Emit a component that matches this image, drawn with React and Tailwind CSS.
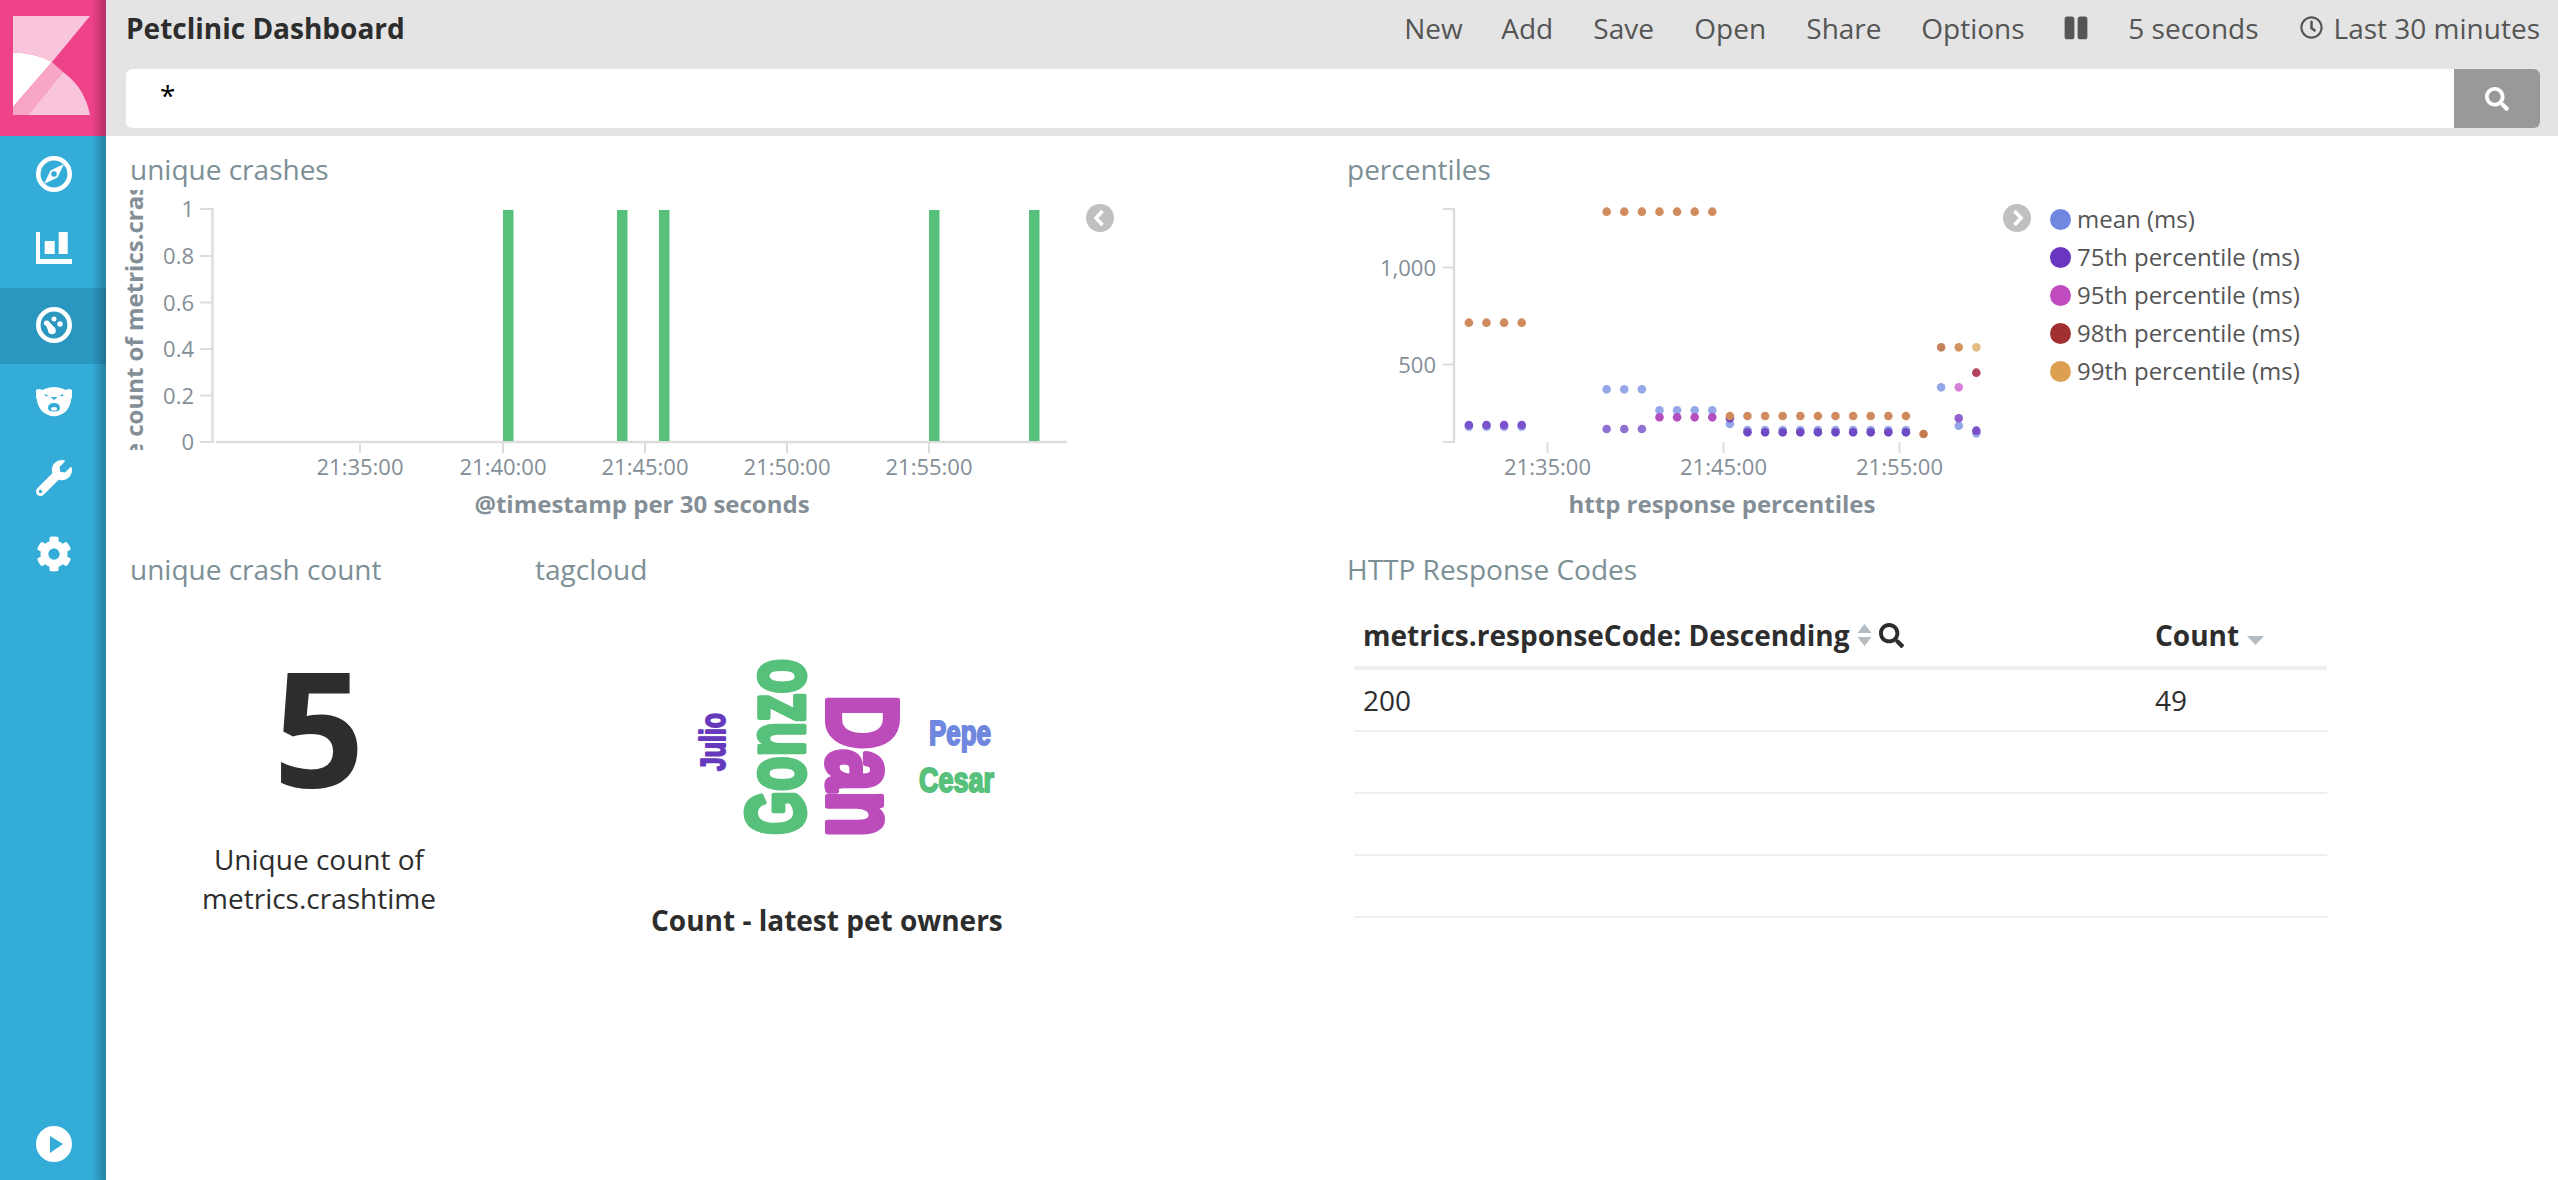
import { FaWrench, FaCog, FaSearch, FaPause, FaRegClock } from 'react-icons/fa';

const font = { fontFamily: '"Open Sans", "Noto Sans", sans-serif' };

const CompassIcon = () => (
  <svg viewBox="0 0 36 36" className="w-[36px] h-[36px]">
    <circle cx="18" cy="18" r="15.7" fill="none" stroke="white" strokeWidth="4.6" />
    <path d="M28 8 L21.5 21.5 L8 28 L14.5 14.5 Z" fill="white" />
    <circle cx="18" cy="18" r="2.8" fill="#33acd7" />
  </svg>
);

const BarsIcon = () => (
  <svg viewBox="0 0 36 32" className="w-[36px] h-[32px]">
    <path d="M0 0 H4 V27 H36 V32 H0 Z M8.7 9 H18.7 V22 H8.7 Z M22.7 0 H31.7 V22 H22.7 Z" fill="white" />
  </svg>
);

const DashboardIcon = () => (
  <svg viewBox="0 0 36 36" className="w-[36px] h-[36px]">
    <circle cx="18" cy="18" r="15.7" fill="none" stroke="white" strokeWidth="4.6" />
    <circle cx="18" cy="12" r="2.5" fill="white" />
    <circle cx="24" cy="17" r="2.7" fill="white" />
    <path d="M8.5 15.5 L12 13.5 L19 21 L15 26.5 Q12.5 26 11.5 22 Z" fill="white" />
    <circle cx="10.5" cy="16" r="2.6" fill="white" />
    <circle cx="16" cy="23.5" r="3.8" fill="white" />
  </svg>
);

const BearIcon = () => (
  <svg viewBox="0 0 36 30" className="w-[36px] h-[30px]">
    <path d="M0 3 Q3 1 6 3 Q12 0 18 0 Q24 0 30 3 Q33 1 36 3 L36 10 Q35 12 34.5 16 Q32 25 24 28 Q18 30.5 12 28 Q4 25 1.5 16 Q1 12 0 10 Z" fill="white" />
    <path d="M8.5 7 L12.5 8.5 L9.5 9.5 Z M27.5 7 L23.5 8.5 L26.5 9.5 Z" fill="#33acd7" />
    <path d="M14.5 10 H21.5 L18 13 Z" fill="#33acd7" />
    <path d="M18 16 Q24 16 24 21 Q24 24.5 18 24.5 Q12 24.5 12 21 Q12 16 18 16 Z" fill="#33acd7" />
    <path d="M18 20 Q21 20 21 22 Q21 23.5 18 23.5 Q15 23.5 15 22 Q15 20 18 20 Z" fill="white" />
  </svg>
);

const PlayIcon = () => (
  <svg viewBox="0 0 36 36" className="w-[36px] h-[36px]">
    <circle cx="18" cy="18" r="18" fill="white" />
    <path d="M14 10 L27 18 L14 27 Z" fill="#33acd7" />
  </svg>
);

const navIcons = [
  { key: 'discover', icon: <CompassIcon /> },
  { key: 'visualize', pad: 'pb-[4px]', icon: <BarsIcon /> },
  { key: 'dashboard', pad: 'pb-[3px]', icon: <DashboardIcon />, active: true },
  { key: 'timelion', icon: <BearIcon /> },
  { key: 'devtools', icon: <FaWrench className="w-[36px] h-[36px] text-white" /> },
  { key: 'settings', icon: <FaCog className="w-[36px] h-[36px] text-white" /> },
];

const Logo = () => (
  <svg viewBox="0 0 77 99" className="w-[77px] h-[99px]">
    <path d="M0 0 H77 L39 46 Q22 37 0 36.6 Z" fill="#f9c5dc" />
    <path d="M0 36.6 Q22 37 39 46 L0 91 Z" fill="#ffffff" />
    <path d="M39 46 L50 56 L15 99 H0 V91 Z" fill="#f8a5c6" />
    <path d="M50 56 Q72 72 77 99 H15 Z" fill="#f9c5dc" />
  </svg>
);

const Sidebar = () => (
  <div className="relative w-[106px] shrink-0 flex flex-col bg-[#33acd7]">
    <div className="h-[136px] bg-[#ee4289] pl-[13px] pt-[16px]">
      <Logo />
    </div>
    {navIcons.map(item => (
      <div
        key={item.key}
        className={`h-[76px] flex items-center pl-[36px] ${item.pad || ''} ${item.active ? 'bg-[#2a97c1]' : ''}`}
      >
        {item.icon}
      </div>
    ))}
    <div className="mt-auto pl-[36px] pb-[18px]">
      <PlayIcon />
    </div>
    <div className="absolute inset-y-0 right-0 w-[14px] bg-gradient-to-r from-transparent to-black/25" />
  </div>
);

const topLinks = [
  { label: 'New', w: 'w-[97px]' },
  { label: 'Add', w: 'w-[92px]' },
  { label: 'Save', w: 'w-[101px]' },
  { label: 'Open', w: 'w-[112px]' },
  { label: 'Share', w: 'w-[115px]' },
  { label: 'Options', w: 'w-[142px]' },
];

const TopBar = () => (
  <div className="h-[136px] bg-[#e4e4e4] shrink-0 pl-[20px] pr-[18px]">
    <div className="flex items-center justify-between h-[55px]">
      <div className="text-[28px] font-bold text-[#2d2d2d]">Petclinic Dashboard</div>
      <div className="flex items-center text-[28px] text-[#555555]">
        {topLinks.map(link => (
          <div key={link.label} className={link.w}>{link.label}</div>
        ))}
        <FaPause className="w-[26px] h-[26px] text-[#555555] mr-[39px]" />
        <div className="mr-[41px]">5 seconds</div>
        <FaRegClock className="w-[23px] h-[23px] mr-[11px]" />
        <div>Last 30 minutes</div>
      </div>
    </div>
    <div className="mt-[14px] h-[59px] flex rounded-[6px] overflow-hidden bg-white">
      <div className="flex-1 pl-[34px] text-[28px] leading-[52px] text-black">*</div>
      <div className="w-[86px] bg-[#999999] flex items-center justify-center">
        <FaSearch className="w-[24px] h-[24px] text-white" />
      </div>
    </div>
  </div>
);

const PanelTitle = ({ children, className = 'pl-[24px]' }) => (
  <div className={`text-[28px] leading-[34px] text-[#7c8f95] ${className}`}>{children}</div>
);

const Chevron = ({ dir }) => (
  <svg viewBox="0 0 28 28" className="w-[28px] h-[28px] shrink-0">
    <circle cx="14" cy="14" r="14" fill="#c0c0c0" />
    <path
      d={dir === 'left' ? 'M16.5 7 L10 14 L16.5 21' : 'M11.5 7 L18 14 L11.5 21'}
      fill="none"
      stroke="white"
      strokeWidth="3.6"
    />
  </svg>
);

const tickText = 'text-[22px] fill-[#848e96]';
const axisText = 'text-[24px] font-bold fill-[#848e96]';

const crashBars = [503, 617, 659, 929, 1029];
const crashYTicks = [
  { y: 209, label: '1' },
  { y: 256, label: '0.8' },
  { y: 302.5, label: '0.6' },
  { y: 349, label: '0.4' },
  { y: 395.5, label: '0.2' },
  { y: 442, label: '0' },
];
const crashXTicks = [
  { x: 360, label: '21:35:00' },
  { x: 503, label: '21:40:00' },
  { x: 645, label: '21:45:00' },
  { x: 787, label: '21:50:00' },
  { x: 929, label: '21:55:00' },
];

const CrashChart = () => (
  <svg viewBox="106 186 980 345" className="w-[980px] h-[345px] shrink-0">
    <defs>
      <clipPath id="yLabelClip">
        <rect x="124" y="190" width="24" height="260" />
      </clipPath>
    </defs>
    <g clipPath="url(#yLabelClip)">
      <text
        transform="translate(143 321) rotate(-90)"
        textAnchor="middle"
        className={axisText}
      >
        Unique count of metrics.crashtime
      </text>
    </g>
    <line x1="212.5" y1="208" x2="212.5" y2="443" stroke="#dddddd" strokeWidth="2.5" />
    <line x1="216" y1="442" x2="1067" y2="442" stroke="#dddddd" strokeWidth="2.5" />
    {crashYTicks.map(t => (
      <g key={t.y}>
        <line x1="200" y1={t.y} x2="212" y2={t.y} stroke="#dddddd" strokeWidth="2" />
        <text x="194" y={t.y + 8} textAnchor="end" className={tickText}>{t.label}</text>
      </g>
    ))}
    {crashXTicks.map(t => (
      <g key={t.x}>
        <line x1={t.x} y1="442" x2={t.x} y2="453" stroke="#dddddd" strokeWidth="2" />
        <text x={t.x} y="475" textAnchor="middle" className={tickText}>{t.label}</text>
      </g>
    ))}
    {crashBars.map(x => (
      <rect key={x} x={x} y="210" width="10.5" height="231" fill="#57c17b" />
    ))}
    <text x="642" y="513" textAnchor="middle" className={axisText}>@timestamp per 30 seconds</text>
  </svg>
);

// point positions were read off a 2.613x / 3x crop of the chart, hence the px()/py() helpers
const px = v => 1400 + v / 2.613;
const py = v => 190 + v / 3;
const step = (from, to) => {
  const out = [];
  for (let v = from; v <= to; v += 46) out.push(v);
  return out;
};

const pointRows = [
  { color: '#95a7e8', y: 710, xs: step(180, 318) },
  { color: '#95a7e8', y: 598, xs: step(540, 632) },
  { color: '#95a7e8', y: 661, xs: step(678, 816) },
  { color: '#95a7e8', y: 702, xs: [862] },
  { color: '#95a7e8', y: 720, xs: step(908, 1322) },
  { color: '#95a7e8', y: 592, xs: [1414] },
  { color: '#95a7e8', y: 707, xs: [1460] },
  { color: '#95a7e8', y: 730, xs: [1506] },
  { color: '#7a52cc', y: 705, xs: step(180, 318) },
  { color: '#9070d0', y: 717, xs: step(540, 632) },
  { color: '#6e4ac4', y: 685, xs: [862] },
  { color: '#6e4ac4', y: 727, xs: step(908, 1322) },
  { color: '#9060cc', y: 685, xs: [1460] },
  { color: '#7a4fc9', y: 722, xs: [1506] },
  { color: '#b44fc0', y: 682, xs: step(678, 816) },
  { color: '#d880d8', y: 592, xs: [1460] },
  { color: '#b0445e', y: 548, xs: [1506] },
  { color: '#d08c5c', y: 65, xs: step(540, 816) },
  { color: '#cf8a5e', y: 398, xs: step(180, 318) },
  { color: '#cf8a5e', y: 678, xs: step(862, 1322) },
  { color: '#c87a52', y: 732, xs: [1368] },
  { color: '#c47f5b', y: 472, xs: [1414] },
  { color: '#d49460', y: 472, xs: [1460] },
  { color: '#e6ba85', y: 472, xs: [1506] },
];

const PercentileChart = () => (
  <svg viewBox="1340 186 660 345" className="w-[660px] h-[345px] shrink-0">
    <line x1="1454" y1="208" x2="1454" y2="443" stroke="#dddddd" strokeWidth="2.5" />
    <line x1="1443" y1="209" x2="1454" y2="209" stroke="#dddddd" strokeWidth="2" />
    <line x1="1443" y1="442" x2="1454" y2="442" stroke="#dddddd" strokeWidth="2" />
    <line x1="1443" y1="267.5" x2="1454" y2="267.5" stroke="#dddddd" strokeWidth="2" />
    <line x1="1443" y1="364.5" x2="1454" y2="364.5" stroke="#dddddd" strokeWidth="2" />
    <text x="1436" y="275.5" textAnchor="end" className={tickText}>1,000</text>
    <text x="1436" y="372.5" textAnchor="end" className={tickText}>500</text>
    {[1547.5, 1723.5, 1899.5].map((x, i) => (
      <g key={x}>
        <line x1={x} y1="442" x2={x} y2="453" stroke="#dddddd" strokeWidth="2" />
        <text x={x} y="475" textAnchor="middle" className={tickText}>
          {['21:35:00', '21:45:00', '21:55:00'][i]}
        </text>
      </g>
    ))}
    {pointRows.map(row =>
      row.xs.map(x => (
        <circle key={`${row.color}-${row.y}-${x}`} cx={px(x)} cy={py(row.y)} r="4.3" fill={row.color} />
      ))
    )}
    <text x="1722" y="513" textAnchor="middle" className={axisText}>http response percentiles</text>
  </svg>
);

const legend = [
  { label: 'mean (ms)', color: 'bg-[#7087e0]' },
  { label: '75th percentile (ms)', color: 'bg-[#6a35c0]' },
  { label: '95th percentile (ms)', color: 'bg-[#c04bbe]' },
  { label: '98th percentile (ms)', color: 'bg-[#a33030]' },
  { label: '99th percentile (ms)', color: 'bg-[#dda050]' },
];

const Legend = () => (
  <div className="ml-[19px] mt-[14px]">
    {legend.map(item => (
      <div key={item.label} className="flex items-center h-[38px] text-[24px] text-[#555555]">
        <div className={`w-[21px] h-[21px] rounded-full ${item.color} mr-[6px]`} />
        {item.label}
      </div>
    ))}
  </div>
);

const MetricPanel = () => (
  <div className="w-[418px] shrink-0 pt-[16px]">
    <PanelTitle>unique crash count</PanelTitle>
    <div className="text-center pl-[8px] text-[#2d2d2d] w-[418px]">
      <div className="text-[160px] font-bold leading-[160px] mt-[59px]">5</div>
      <div className="text-[28px] leading-[39px] mt-[35px]">
        Unique count of
        <br />
        metrics.crashtime
      </div>
    </div>
  </div>
);

const tagFont = '"Liberation Sans", sans-serif';

const TagCloud = () => (
  <svg viewBox="690 640 320 210" className="w-[320px] h-[210px] mt-[54px] ml-[166px]">
    <g fontFamily={tagFont} fontWeight="700" strokeLinejoin="round">
      <text
        transform="translate(804 835) rotate(-90)"
        fontSize="84"
        textLength="176"
        lengthAdjust="spacingAndGlyphs"
        fill="#57c17b"
        stroke="#57c17b"
        strokeWidth="5"
      >
        Gonzo
      </text>
      <text
        transform="translate(828 695) rotate(90)"
        fontSize="100"
        textLength="142"
        lengthAdjust="spacingAndGlyphs"
        fill="#bb4cba"
        stroke="#bb4cba"
        strokeWidth="6"
      >
        Dan
      </text>
      <text
        transform="translate(725 771) rotate(-90)"
        fontSize="35"
        textLength="58"
        lengthAdjust="spacingAndGlyphs"
        fill="#6739bd"
        stroke="#6739bd"
        strokeWidth="2"
      >
        Julio
      </text>
      <text
        x="929"
        y="745"
        fontSize="35"
        textLength="62"
        lengthAdjust="spacingAndGlyphs"
        fill="#7087e0"
        stroke="#7087e0"
        strokeWidth="2"
      >
        Pepe
      </text>
      <text
        x="919"
        y="792"
        fontSize="35"
        textLength="75"
        lengthAdjust="spacingAndGlyphs"
        fill="#57c17b"
        stroke="#57c17b"
        strokeWidth="2"
      >
        Cesar
      </text>
    </g>
  </svg>
);

const TagPanel = () => (
  <div className="flex-1 pt-[16px]">
    <PanelTitle className="pl-[11px]">tagcloud</PanelTitle>
    <TagCloud />
    <div className="text-[28px] font-bold text-[#2d2d2d] pl-[127px] mt-[51px] leading-[38px]">
      Count - latest pet owners
    </div>
  </div>
);

const SortIcon = () => (
  <svg viewBox="0 0 15 24" className="w-[15px] h-[24px] mx-[7px]">
    <path d="M7.5 1 L14.5 10 H0.5 Z M7.5 23 L14.5 14 H0.5 Z" fill="#b4bcc2" />
  </svg>
);

const CaretIcon = () => (
  <svg viewBox="0 0 17 9" className="w-[17px] h-[9px] ml-[8px] mt-[10px]">
    <path d="M0 0 H17 L8.5 9 Z" fill="#b4bcc2" />
  </svg>
);

const ResponseTable = () => (
  <div className="w-[973px] ml-[14px] mt-[18px] text-[28px] text-[#2d2d2d]">
    <div className="flex items-center h-[62px] font-bold border-b-4 border-[#ecf0f1] box-content">
      <div className="w-[801px] pl-[9px] flex items-center">
        metrics.responseCode: Descending
        <SortIcon />
        <FaSearch className="w-[25px] h-[25px]" />
      </div>
      <div className="flex items-center">
        Count
        <CaretIcon />
      </div>
    </div>
    <div className="flex items-center h-[62px] border-b-2 border-[#ecf0f1]">
      <div className="w-[801px] pl-[9px]">200</div>
      <div>49</div>
    </div>
    <div className="h-[62px] border-b-2 border-[#ecf0f1]" />
    <div className="h-[62px] border-b-2 border-[#ecf0f1]" />
    <div className="h-[62px] border-b-2 border-[#ecf0f1]" />
  </div>
);

export default function App() {
  return (
    <div className="flex h-screen w-full bg-white overflow-hidden" style={font}>
      <Sidebar />
      <div className="flex-1 flex flex-col min-w-0">
        <TopBar />
        <div className="grid grid-cols-[1234px_1fr] grid-rows-[400px_1fr] flex-1">
          <div className="pt-[16px]">
            <PanelTitle>unique crashes</PanelTitle>
            <div className="flex">
              <CrashChart />
              <div className="mt-[18px]">
                <Chevron dir="left" />
              </div>
            </div>
          </div>
          <div className="pt-[16px]">
            <PanelTitle className="pl-[7px]">percentiles</PanelTitle>
            <div className="flex">
              <PercentileChart />
              <div className="mt-[18px] ml-[3px]">
                <Chevron dir="right" />
              </div>
              <Legend />
            </div>
          </div>
          <div className="flex">
            <MetricPanel />
            <TagPanel />
          </div>
          <div className="pt-[16px]">
            <PanelTitle className="pl-[7px]">HTTP Response Codes</PanelTitle>
            <ResponseTable />
          </div>
        </div>
      </div>
    </div>
  );
}
